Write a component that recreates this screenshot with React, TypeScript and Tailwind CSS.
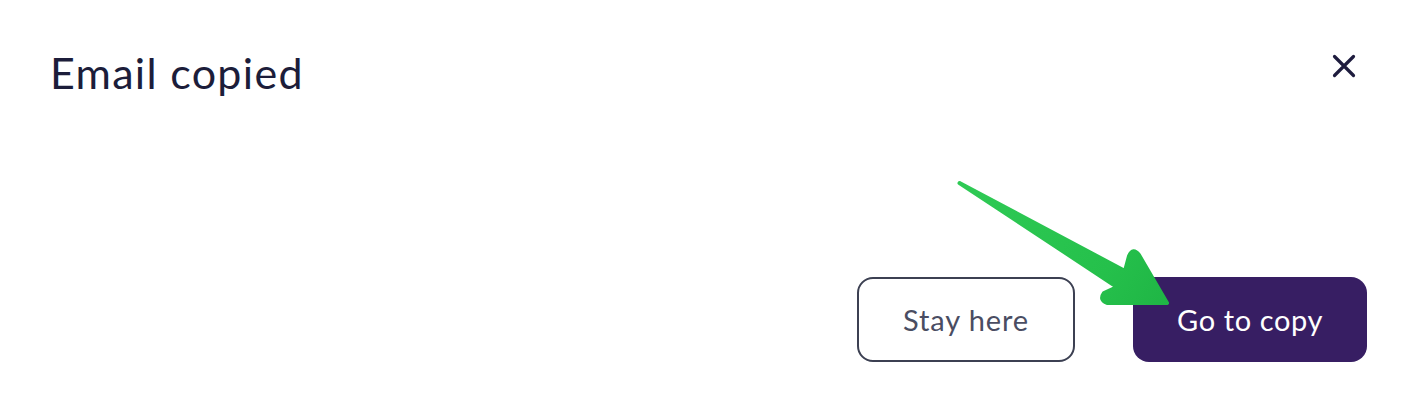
import React from "react";

function CloseIcon() {
  return (
    <svg width="24" height="24" viewBox="0 0 24 24" className="block">
      <path d="M2.5 2.5 L21.5 21.5 M21.5 2.5 L2.5 21.5" stroke="#1e1c3e" strokeWidth="3.2" strokeLinecap="round" />
    </svg>
  );
}

function Arrow() {
  return (
    <svg
      className="absolute left-[950px] top-[175px] pointer-events-none"
      width="240"
      height="145"
      viewBox="950 175 240 145"
    >
      <defs>
        <linearGradient id="ag" x1="960" y1="183" x2="1170" y2="306" gradientUnits="userSpaceOnUse">
          <stop offset="0" stopColor="#2fca55" />
          <stop offset="0.7" stopColor="#25c04b" />
          <stop offset="1" stopColor="#1fb545" />
        </linearGradient>
      </defs>
      <path
        d="M959.5 183 L1125 271 L1129 256 Q1133 247 1139 255 L1167 303 L1107 303 Q1099 300 1104 293 L1117 287 Z"
        fill="url(#ag)"
        stroke="url(#ag)"
        strokeWidth="4"
        strokeLinejoin="round"
      />
    </svg>
  );
}

export default function App() {
  return (
    <div
      className="relative w-[1412px] h-[398px] bg-white flex flex-col px-[51px] pt-[51px] pb-[36px]"
      style={{ fontFamily: "Lato, 'Noto Sans', sans-serif" }}
    >
      <div className="flex items-start justify-between">
        <h1 className="text-[43px] leading-[43px] text-[#1c1d3a] font-normal tracking-[1.3px] -ml-[1px]">Email copied</h1>
        <button className="mt-[3px] mr-[5px]">
          <CloseIcon />
        </button>
      </div>
      <div className="flex-1" />
      <div className="flex justify-end gap-[58px] mr-[-6px]">
        <button className="w-[218px] h-[85px] rounded-[16px] border-[2.5px] border-[#3c4052] bg-white text-[29px] tracking-[0.9px] text-[#4a4d62]">
          Stay here
        </button>
        <button className="w-[234px] h-[85px] rounded-[16px] bg-[#371e63] text-[29px] tracking-[0.6px] text-white">
          Go to copy
        </button>
      </div>
      <Arrow />
    </div>
  );
}
